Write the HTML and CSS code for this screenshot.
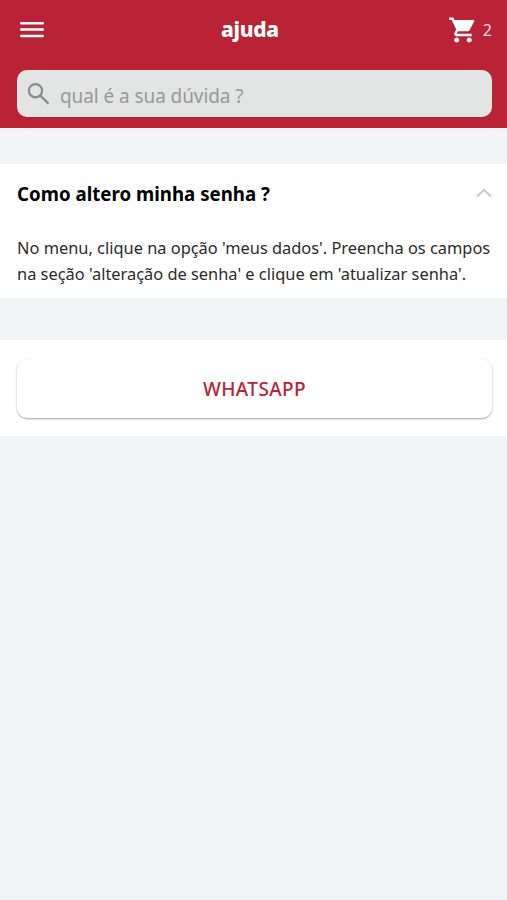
FILE: index.html
```html
<!DOCTYPE html>
<html lang="pt-BR">
<head>
  <meta charset="UTF-8" />
  <meta name="viewport" content="width=device-width, initial-scale=1.0"/>
  <title>ajuda</title>
  <link rel="stylesheet" href="styles.css">
</head>
<body>

  <header class="header">
    <div class="top-bar">
      <button class="menu-button" type="button" aria-label="menu">
        <svg width="24" height="18" viewBox="0 0 24 18" fill="none" stroke="#fff" stroke-width="2.5" stroke-linecap="round">
          <path d="M1.2 2.2h21.6M1.2 8.500h21.6M1.2 14.900h21.6"/>
        </svg>
      </button>
      <h1>ajuda</h1>
      <a class="cart" href="#">
        <svg width="30" height="30" viewBox="0 0 24 24" fill="#fff">
          <path d="M7 18c-1.100 0-1.990.9-1.990 2S5.900 22 7 22s2-.9 2-2-.9-2-2-2zM1 2v2h2l3.600 7.590-1.350 2.450c-.16.280-.25.610-.25.960 0 1.100.9 2 2 2h12v-2H7.420c-.14 0-.25-.11-.25-.25l.03-.12.900-1.630h7.450c.75 0 1.410-.41 1.750-1.030l3.580-6.490c.08-.14.120-.31.120-.480 0-.55-.45-1-1-1H5.210l-.94-2H1zm16 16c-1.100 0-1.990.9-1.990 2s.89 2 1.990 2 2-.9 2-2-.9-2-2-2z"/>
        </svg>
        <span>2</span>
      </a>
    </div>

    <label class="search">
      <svg width="24" height="24" viewBox="0 0 24 24" fill="none" stroke="#8b8b8b" stroke-width="2.2">
        <circle cx="8.500" cy="8.700" r="6.600"/>
        <path d="M13.300 13.600l8.200 8"/>
      </svg>
      <input type="text" placeholder="qual é a sua dúvida ?">
    </label>
  </header>

  <!-- Perguntas -->
  <section class="question">
    <div class="question-title">
      <h2>Como altero minha senha ?</h2>
      <svg width="16" height="10" viewBox="0 0 16 10" fill="none" stroke="#cbcbcb" stroke-width="2">
        <path d="M1 8.500l7-6.700 7 6.700"/>
      </svg>
    </div>
    <p>No menu, clique na opção 'meus dados'. Preencha os campos na seção 'alteração de senha' e clique em 'atualizar senha'.</p>
  </section>

  <!-- Contato -->
  <section class="contact">
    <button class="whatsapp" type="button">WHATSAPP</button>
  </section>

</body>
</html>
```

FILE: styles.css
```css
* {
  box-sizing: border-box;
}

body {
  margin: 0;
  font-family: 'Segoe UI', 'Noto Sans', sans-serif;
  background-color: #f2f4f6;
  min-height: 100vh;
}

h1, h2, p {
  margin: 0;
}

.header {
  height: 128px;
  padding: 0 15px 0 17px;
  background-color: #b92335;
}

.top-bar {
  display: flex;
  align-items: center;
  justify-content: space-between;
  height: 58px;
}

.menu-button {
  display: flex;
  padding: 2px 3px 0;
  border: none;
  background: none;
}

h1 {
  margin-left: 5px;
  color: #fff;
  font-size: 21px;
  font-weight: 800;
  letter-spacing: -0.3px;
  line-height: 28px;
}

.cart {
  display: flex;
  align-items: center;
  justify-content: flex-end;
  gap: 5px;
  padding-top: 1px;
  color: #fff;
  font-size: 16px;
  text-decoration: none;
}

.cart span {
  color: #fbdde0;
}

.search {
  display: flex;
  align-items: center;
  gap: 9px;
  height: 47px;
  margin-top: 12px;
  padding: 0 10px;
  border-radius: 10px;
  background-color: #e3e4e4;
}

.search input {
  flex: 1;
  min-width: 0;
  padding: 4px 0 0;
  border: none;
  outline: none;
  background: none;
  font-family: inherit;
  font-size: 19px;
  letter-spacing: -0.08px;
}

.search input::placeholder {
  color: #979999;
}

.question {
  height: 134px;
  margin-top: 36px;
  padding: 0 15px 0 17px;
  background-color: #fff;
}

.question-title {
  display: flex;
  align-items: center;
  justify-content: space-between;
  height: 58px;
}

h2 {
  color: #000;
  font-size: 18.7px;
}

.question p {
  margin-top: 13px;
  color: #2b2b2b;
  font-size: 16.4px;
  line-height: 26px;
}

.contact {
  height: 96px;
  margin-top: 42px;
  padding: 19px 15px 0 17px;
  background-color: #fff;
}

.whatsapp {
  display: block;
  width: 100%;
  height: 59px;
  border: none;
  border-radius: 10px;
  background-color: #fff;
  box-shadow: 0 1px 2px rgba(0,0,0,0.36);
  color: #b92335;
  font-family: inherit;
  font-size: 19px;
  font-weight: 500;
  letter-spacing: 0.4px;
}
```
